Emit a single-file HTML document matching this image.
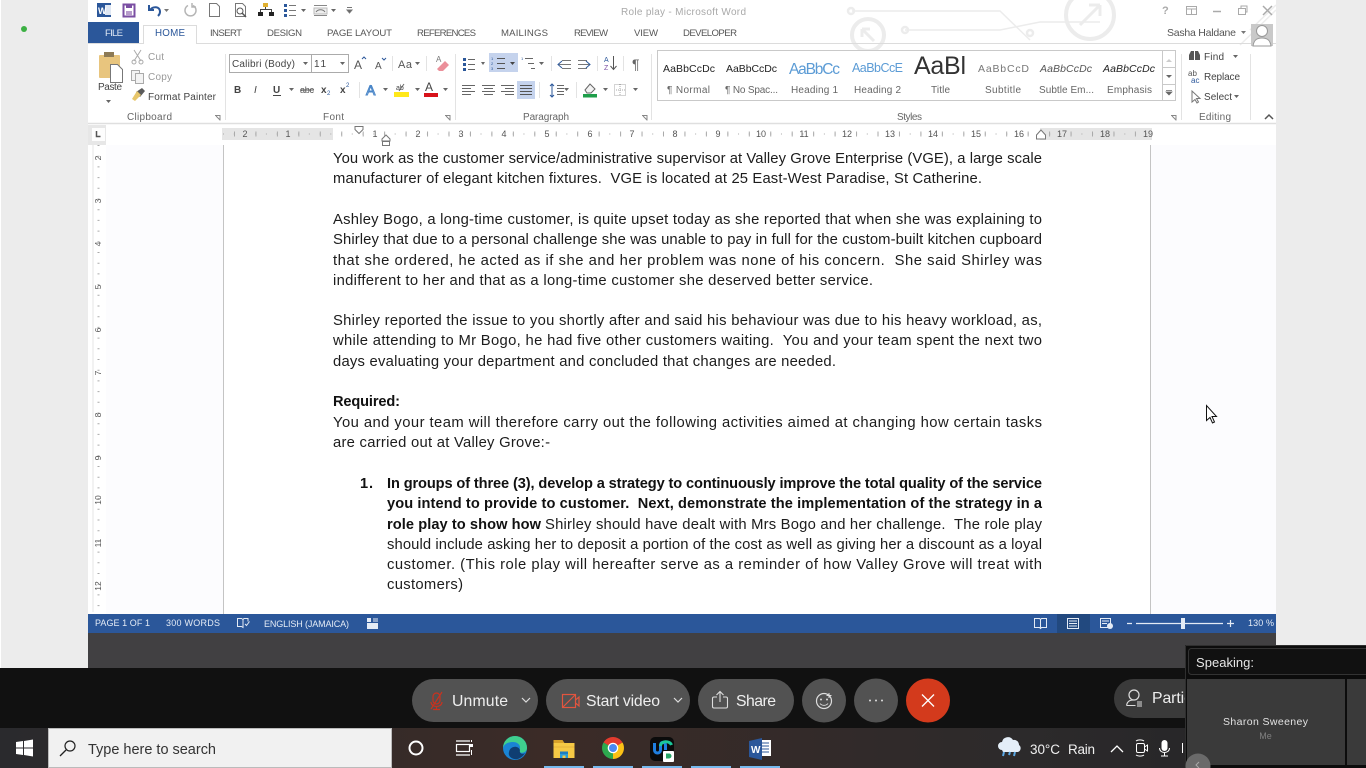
<!DOCTYPE html>
<html lang="en"><head><meta charset="utf-8"><title>Role play - Microsoft Word</title>
<style>
html,body{margin:0;padding:0;width:1366px;height:768px;overflow:hidden;background:#ececec}
svg{display:block;position:absolute;left:0;top:0}
text{font-family:"Liberation Sans",sans-serif;white-space:pre}
.d{font-size:14.800px;fill:#1c1c1c}
.b{font-size:14.600px;fill:#111;font-weight:bold}
.t{font-size:9.600px;fill:#555}
.r{font-size:10px;fill:#444}
.g{font-size:10px;fill:#666}
.n{font-size:9px;fill:#555}
.s{font-size:9px;fill:#e4ebf5}
.z{font-size:15.800px;fill:#eee}
.soft{filter:blur(.3px)}
.docsoft{filter:blur(.2px)}
</style></head><body>
<svg width="1366" height="768" viewBox="0 0 1366 768" xmlns="http://www.w3.org/2000/svg">
<rect width="1366" height="768" fill="#ececec"/>
<rect x="0" y="0" width="1" height="668" fill="#fff"/>
<circle cx="24" cy="29" r="3" fill="#3cb043"/>
<rect x="88" y="0" width="1188" height="614" fill="#fff"/>

<g class="soft">
<!-- circuit decoration -->
<g fill="none" stroke="#ececec" stroke-width="2.500">
<path d="M852 11H1000L1030 40M905 30H1000L1040 22H1100" stroke-width="1.500"/>
<circle cx="851" cy="11" r="3"/><circle cx="905" cy="30" r="3"/><circle cx="1030" cy="33" r="3"/>
<circle cx="868" cy="35" r="16" stroke-width="4"/><path d="M862 29l12 12M862 29h8M862 29v8" stroke-width="3"/>
<circle cx="1090" cy="15" r="24" stroke-width="4"/><path d="M1080 25l20-20M1100 5h-11M1100 5v11" stroke-width="3"/>
<path d="M1250 30L1276 5M1240 45L1276 10" stroke-width="1.500"/>
</g>

<!-- QAT -->
<rect x="97" y="3" width="14" height="14" fill="#2b579a"/><rect x="105" y="5" width="6" height="10" fill="#dfe7f3"/><text x="98" y="14" font-size="9" font-weight="bold" fill="#fff">W</text>
<rect x="123.500" y="4.500" width="11" height="12" fill="none" stroke="#7b4fa3" stroke-width="2"/><rect x="126" y="5" width="6" height="3" fill="#7b4fa3"/><rect x="126" y="11" width="6" height="5" fill="#b79ccb"/>
<path d="M150 10c3-4 10-4 10 2 0 2-1 3-2 4M149 5v5h5" fill="none" stroke="#2b579a" stroke-width="2"/>
<path d="M164 9h5l-2.500 3z" fill="#777"/>
<path d="M193 5.500a5.500 5.500 0 1 1-5 0M192 3v4h4" fill="none" stroke="#b5b5b5" stroke-width="1.500"/>
<path d="M209.500 3.500h7l3 3v10h-10z" fill="#fff" stroke="#777"/>
<path d="M235.500 3.500h7l3 3v10h-10z" fill="#fff" stroke="#777"/><circle cx="240" cy="11" r="3" fill="none" stroke="#555"/><path d="M242 13l4 4" stroke="#555" stroke-width="1.500"/>
<rect x="263" y="3" width="5" height="4" fill="#e0b030"/><rect x="258" y="12" width="5" height="4" fill="#222"/><rect x="269" y="12" width="5" height="4" fill="#222"/><path d="M265.500 7v2.500h-5V12M265.500 9.500h6V12" fill="none" stroke="#444"/>
<g fill="#2b579a"><rect x="284" y="4" width="3" height="3"/><rect x="284" y="9" width="3" height="3"/><rect x="284" y="14" width="3" height="3"/></g><path d="M289 5.500h7M289 10.500h7M289 15.500h7" stroke="#777"/><path d="M301 9h5l-2.500 3z" fill="#666"/>
<path d="M314 5.500h13M314 15.500h13" stroke="#888"/><rect x="314" y="8" width="13" height="6" fill="#eee" stroke="#bbb"/><path d="M316 12c2-3 7-3 9 0" fill="none" stroke="#777"/><path d="M331 9h5l-2.500 3z" fill="#666"/>
<path d="M347 7.500h5M347 10h5l-2.500 3z" stroke="#777" fill="#666"/>

<text x="621" y="15" font-size="10" fill="#a9a9a9" textLength="125">Role play - Microsoft Word</text>
<text x="1162" y="14" font-size="11" fill="#aaa" font-weight="bold">?</text>
<rect x="1186.500" y="6.500" width="10" height="8" fill="none" stroke="#aaa"/><path d="M1186 9h11M1191.500 9v5" stroke="#aaa"/>
<path d="M1213 11.500h8" stroke="#aaa" stroke-width="1.500"/>
<rect x="1238.500" y="8.500" width="7" height="6" fill="none" stroke="#aaa"/><path d="M1241 8V6h6v6h-2" fill="none" stroke="#aaa"/>
<path d="M1263 6l9 9M1272 6l-9 9" stroke="#aaa" stroke-width="1.500"/>

<!-- tabs -->
<rect x="88" y="22" width="51" height="21" fill="#2b579a"/>
<text x="105" y="36" font-size="9.600" fill="#dfe7f3" textLength="18">FILE</text>
<path d="M88 43.500H143.500V25.500H196.500V43.500H1276" fill="#fff" stroke="#dcdcdc"/>
<rect x="144" y="27" width="52" height="18" fill="#fff"/>
<text x="155" y="36" font-size="9.800" fill="#2b579a" textLength="30">HOME</text>
<text x="210" y="36" class="t" textLength="32">INSERT</text>
<text x="267" y="36" class="t" textLength="35">DESIGN</text>
<text x="327" y="36" class="t" textLength="65">PAGE LAYOUT</text>
<text x="417" y="36" class="t" textLength="59">REFERENCES</text>
<text x="501" y="36" class="t" textLength="47">MAILINGS</text>
<text x="574" y="36" class="t" textLength="34">REVIEW</text>
<text x="634" y="36" class="t" textLength="24">VIEW</text>
<text x="683" y="36" class="t" textLength="54">DEVELOPER</text>
<text x="1167" y="36" class="t" textLength="69" style="font-size:10.500px">Sasha Haldane</text>
<path d="M1241 31h5l-2.500 3z" fill="#777"/>
<rect x="1251" y="24" width="22" height="22" fill="#c9c9c9"/><circle cx="1262" cy="31" r="5.500" fill="#fff" stroke="#999"/><path d="M1253 46c1-7 5-8 9-8s8 1 9 8z" fill="#fff" stroke="#999"/>

<!-- ribbon -->
<path d="M88 123.500H1276" stroke="#dfdfdf" stroke-width="1.500"/>
<path d="M225.500 54V120M455.500 54V120M651.500 54V120M1181.500 54V120M1250.500 54V120" stroke="#e3e3e3"/>

<!-- clipboard -->
<rect x="99" y="55" width="21" height="23" rx="1" fill="#e8c57e"/><rect x="104" y="52" width="10" height="5" fill="#8d7a55"/><path d="M110.500 64.500h7l5 5v13h-12z" fill="#fff" stroke="#777"/>
<text x="98" y="90" class="r" textLength="24">Paste</text><path d="M106 100h5l-2.500 3z" fill="#666"/>
<path d="M134 50l7 11M141 50l-7 11" stroke="#aaa"/><circle cx="134" cy="62" r="2" fill="none" stroke="#aaa"/><circle cx="141" cy="62" r="2" fill="none" stroke="#aaa"/>
<text x="148" y="60" class="g" style="fill:#9a9a9a" textLength="16">Cut</text>
<rect x="131.500" y="70.500" width="8" height="10" fill="#f3f3f3" stroke="#aaa"/><rect x="135.500" y="73.500" width="8" height="10" fill="#f3f3f3" stroke="#aaa"/>
<text x="148" y="80" class="g" style="fill:#9a9a9a" textLength="24">Copy</text>
<path d="M136 92l6-4 3 3-5 6z" fill="#5b5b5b"/><path d="M132 99l5-8 4 4-6 6z" fill="#e7c66b"/>
<text x="148" y="100" class="r" textLength="68">Format Painter</text>
<text x="127" y="120" class="g" textLength="45">Clipboard</text>
<path d="M215 115.500h5v5M216 116l4 4" fill="none" stroke="#888"/>

<!-- font -->
<rect x="229.500" y="54.500" width="119" height="18" fill="#fff" stroke="#ababab"/><path d="M311.500 54.500V72.500" stroke="#ababab"/>
<text x="232" y="67" class="r" textLength="63">Calibri (Body)</text><path d="M303 62h5l-2.500 3z" fill="#666"/>
<text x="314" y="67" class="r" textLength="12">11</text><path d="M340 62h5l-2.500 3z" fill="#666"/>
<text x="354" y="69" font-size="12" fill="#555">A</text><path d="M362 59l2-2 2 2" fill="none" stroke="#2b579a"/>
<text x="375" y="69" font-size="10" fill="#555">A</text><path d="M382 58l2 2 2-2" fill="none" stroke="#2b579a"/>
<path d="M392.500 56V71" stroke="#e3e3e3"/>
<text x="398" y="68" font-size="11" fill="#555" textLength="14">Aa</text><path d="M415 62h5l-2.500 3z" fill="#666"/>
<path d="M426.500 56V71" stroke="#e3e3e3"/>
<path d="M437 69l8-8 4 4-6 6h-4z" fill="#eb8f9a"/><text x="436" y="62" font-size="8" fill="#777">A</text>

<text x="234" y="93" font-size="10" font-weight="bold" fill="#444">B</text>
<text x="254" y="93" font-size="10" font-style="italic" fill="#444" font-family="Liberation Serif">I</text>
<text x="273" y="93" font-size="10" fill="#444" font-weight="bold">U</text><path d="M273 95.500h8" stroke="#444"/>
<path d="M289 88h5l-2.500 3z" fill="#666"/>
<text x="300" y="93" font-size="9" fill="#555" textLength="14">abc</text><path d="M300 90h14" stroke="#555"/>
<text x="321" y="93" font-size="10" fill="#444" font-weight="bold">x</text><text x="327" y="95" font-size="6" fill="#2b579a">2</text>
<text x="340" y="93" font-size="10" fill="#444" font-weight="bold">x</text><text x="346" y="87" font-size="6" fill="#2b579a">2</text>
<path d="M359.500 82V98" stroke="#e3e3e3"/>
<text x="366" y="95" font-size="14" fill="#fff" stroke="#4a86c8" stroke-width="1">A</text><path d="M383 88h5l-2.500 3z" fill="#666"/>
<text x="396" y="90" font-size="7" fill="#444">ab</text><path d="M404 84l-5 7" stroke="#666"/><rect x="394" y="92" width="15" height="5" fill="#ffe81a"/><path d="M415 88h5l-2.500 3z" fill="#666"/>
<text x="425" y="91" font-size="12" fill="#444">A</text><rect x="424" y="93" width="14" height="4" fill="#d8121a"/><path d="M443 88h5l-2.500 3z" fill="#666"/>
<text x="323" y="120" class="g" textLength="21">Font</text>
<path d="M445 115.500h5v5M446 116l4 4" fill="none" stroke="#888"/>

<!-- paragraph -->
<rect x="489" y="53" width="29" height="19" fill="#c5d3ed"/>
<g fill="#2b579a"><rect x="463" y="58" width="3" height="3"/><rect x="463" y="63" width="3" height="3"/><rect x="463" y="68" width="3" height="3"/></g>
<path d="M468 59.500h7M468 64.500h7M468 69.500h7" stroke="#666"/><path d="M481 62h4l-2 3z" fill="#666"/>
<text x="491" y="60" font-size="4" fill="#2b579a">1</text><text x="491" y="65" font-size="4" fill="#2b579a">2</text><text x="491" y="70" font-size="4" fill="#2b579a">3</text>
<path d="M497 58.500h8M497 63.500h8M497 68.500h8" stroke="#555"/><path d="M510 62h5l-2.500 3z" fill="#444"/>
<text x="521" y="60" font-size="4" fill="#2b579a">1</text><path d="M525 58.500h8M528 63.500h6M531 68.500h4" stroke="#666"/><path d="M539 62h5l-2.500 3z" fill="#666"/>
<path d="M551.500 56V71" stroke="#e3e3e3"/>
<path d="M558 64.500h13M562 60.500h9M562 68.500h9" stroke="#777"/><path d="M562 61l-4 3.500 4 3.500" fill="none" stroke="#2b579a"/>
<path d="M578 64.500h12M578 60.500h9M578 68.500h9" stroke="#777"/><path d="M586 61l4 3.500-4 3.500" fill="none" stroke="#2b579a"/>
<path d="M597.500 56V71" stroke="#e3e3e3"/>
<text x="604" y="62" font-size="7" fill="#2b579a">A</text><text x="604" y="70" font-size="7" fill="#7b4fa3">Z</text><path d="M613.500 56v13M610.500 66l3 3.500 3-3.500" fill="none" stroke="#555"/>
<path d="M623.500 56V71" stroke="#e3e3e3"/>
<text x="632" y="69" font-size="14" fill="#666">¶</text>

<path d="M462 85.500h13M462 88.500h9M462 91.500h13M462 94.500h9" stroke="#666"/>
<path d="M482 85.500h13M484 88.500h9M482 91.500h13M484 94.500h9" stroke="#666"/>
<path d="M501 85.500h13M505 88.500h9M501 91.500h13M505 94.500h9" stroke="#666"/>
<rect x="517" y="81" width="18" height="18" fill="#c5d3ed"/><path d="M520 85.500h12M520 88.500h12M520 91.500h12M520 94.500h12" stroke="#555"/>
<path d="M539.500 82V98" stroke="#e3e3e3"/>
<path d="M552 84v13M550 86l2-2 2 2M550 95l2 2 2-2" fill="none" stroke="#2b579a"/><path d="M557 85.500h7M557 88.500h7M557 91.500h7M557 94.500h7" stroke="#666"/><path d="M564 88h5l-2.500 3z" fill="#666"/>
<path d="M576.500 82V98" stroke="#e3e3e3"/>
<path d="M585 90l5-6 5 5-4 4h-4z" fill="#f3f3f3" stroke="#666"/><rect x="583" y="94" width="14" height="3.500" fill="#1e9e4a"/><path d="M603 88h5l-2.500 3z" fill="#666"/>
<rect x="614.500" y="84.500" width="11" height="11" fill="none" stroke="#aaa" stroke-dasharray="1 1"/><path d="M620 84v12M614 90h12" stroke="#aaa" stroke-dasharray="1 1"/><path d="M633 88h5l-2.500 3z" fill="#666"/>
<text x="523" y="120" class="g" textLength="46">Paragraph</text>
<path d="M642 115.500h5v5M643 116l4 4" fill="none" stroke="#888"/>

<!-- styles -->
<rect x="657.500" y="50.500" width="518" height="50" fill="#fff" stroke="#c9c9c9"/>
<path d="M1162.500 50.500V100.500M1162.500 67.500H1175.500M1162.500 84.500H1175.500" stroke="#c9c9c9"/>
<path d="M1166 62l3-3 3 3z" fill="#ccc"/><path d="M1166 75h6l-3 3z" fill="#666"/><path d="M1166 90.500h6M1166 92h6l-3 3z" stroke="#666" stroke-width=".7" fill="#666"/>
<text x="663" y="72" font-size="10.500" fill="#222" textLength="52">AaBbCcDc</text>
<text x="726" y="72" font-size="10.500" fill="#222" textLength="51">AaBbCcDc</text>
<text x="789" y="74" font-size="15.500" fill="#5b9bd5" textLength="51">AaBbCc</text>
<text x="852" y="72" font-size="12.500" fill="#5b9bd5" textLength="51">AaBbCcE</text>
<text x="914" y="74" font-size="25" fill="#333" textLength="52">AaBl</text>
<text x="978" y="72" font-size="10.500" fill="#777" textLength="51">AaBbCcD</text>
<text x="1040" y="72" font-size="10.500" fill="#555" font-style="italic" textLength="52">AaBbCcDc</text>
<text x="1103" y="72" font-size="10.500" fill="#222" font-style="italic" textLength="52">AaBbCcDc</text>
<text x="667" y="93" class="g" textLength="43">¶ Normal</text>
<text x="725" y="93" class="g" textLength="53">¶ No Spac...</text>
<text x="791" y="93" class="g" textLength="47">Heading 1</text>
<text x="854" y="93" class="g" textLength="47">Heading 2</text>
<text x="931" y="93" class="g" textLength="19">Title</text>
<text x="985" y="93" class="g" textLength="36">Subtitle</text>
<text x="1039" y="93" class="g" textLength="55">Subtle Em...</text>
<text x="1107" y="93" class="g" textLength="45">Emphasis</text>
<text x="897" y="120" class="g" textLength="25">Styles</text>
<path d="M1171 115.500h5v5M1172 116l4 4" fill="none" stroke="#888"/>

<!-- editing -->
<path d="M1189 60v-5l2-4h3v9zM1195 60v-9h3l2 4v5z" fill="#555"/>
<text x="1204" y="60" class="r" textLength="20">Find</text><path d="M1233 55h5l-2.500 3z" fill="#666"/>
<text x="1188" y="76" font-size="8" fill="#555">ab</text><text x="1191" y="83" font-size="8" fill="#2b579a">ac</text>
<text x="1204" y="80" class="r" textLength="36">Replace</text>
<path d="M1192 91v11l3-2.500 2 3.500 1.500-1-2-3.500h3.500z" fill="#fff" stroke="#777"/>
<text x="1204" y="100" class="r" textLength="28">Select</text><path d="M1234 95h5l-2.500 3z" fill="#666"/>
<text x="1199" y="120" class="g" textLength="32">Editing</text>
<path d="M1265 119l4-4 4 4" fill="none" stroke="#555" stroke-width="1.500"/>

<!-- horizontal ruler -->
<rect x="88" y="125" width="18" height="20" fill="#e7e7e7"/>
<rect x="92" y="128" width="13" height="13" fill="#fdfdfd"/>
<path d="M96.500 131v5.500h4" fill="none" stroke="#555" stroke-width="1.500"/>
<rect x="222" y="128" width="930" height="12" fill="#fff"/>
<rect x="222" y="128" width="111" height="12" fill="#e5e5e5"/>
<rect x="1040" y="128" width="112" height="12" fill="#e5e5e5"/>
<path d="M223 134H1152" stroke="#aaa" stroke-dasharray="1 9.730"/>
<path d="M224 134H1152" stroke="#aaa" stroke-width="5" stroke-dasharray="1 20.450" stroke-dashoffset="-10"/>
<g text-anchor="middle" font-size="9" fill="#555">
<rect x="240" y="129" width="10" height="10" fill="#e5e5e5"/><rect x="283" y="129" width="10" height="10" fill="#e5e5e5"/>
<text x="245" y="137">2</text><text x="288" y="137">1</text>
<text x="375" y="137">1</text><text x="418" y="137">2</text><text x="461" y="137">3</text><text x="504" y="137">4</text><text x="547" y="137">5</text><text x="590" y="137">6</text><text x="632" y="137">7</text><text x="675" y="137">8</text><text x="718" y="137">9</text><text x="761" y="137">10</text><text x="804" y="137">11</text><text x="847" y="137">12</text><text x="890" y="137">13</text><text x="933" y="137">14</text><text x="976" y="137">15</text><text x="1019" y="137">16</text><text x="1062" y="137">17</text><text x="1105" y="137">18</text><text x="1148" y="137">19</text>
</g>
<path d="M355 126.500h8v3l-4 4-4-4z" fill="#fff" stroke="#777"/>
<path d="M386 135l-4 4v2h8v-2z" fill="#fff" stroke="#777"/><rect x="382.500" y="141.500" width="7" height="4" fill="#fff" stroke="#777"/>
<path d="M1041 130l-4.500 5v4h9v-4z" fill="#fff" stroke="#777"/>

<!-- vertical ruler -->
<path d="M93 145V612" stroke="#e6e6e6"/>
<path d="M98.500 145V612" stroke="#aaa" stroke-width="2" stroke-dasharray="1 9.700"/>
<g font-size="8.500" fill="#555" text-anchor="middle">
<text transform="rotate(-90 101 158)" x="101" y="158">2</text>
<text transform="rotate(-90 101 201)" x="101" y="201">3</text>
<text transform="rotate(-90 101 244)" x="101" y="244">4</text>
<text transform="rotate(-90 101 287)" x="101" y="287">5</text>
<text transform="rotate(-90 101 330)" x="101" y="330">6</text>
<text transform="rotate(-90 101 373)" x="101" y="373">7</text>
<text transform="rotate(-90 101 415)" x="101" y="415">8</text>
<text transform="rotate(-90 101 458)" x="101" y="458">9</text>
<text transform="rotate(-90 101 500)" x="101" y="500">10</text>
<text transform="rotate(-90 101 543)" x="101" y="543">11</text>
<text transform="rotate(-90 101 586)" x="101" y="586">12</text>
</g>
</g>

<!-- page -->
<rect x="106" y="145" width="117" height="469" fill="#fcfcfe"/>
<rect x="1151" y="145" width="125" height="469" fill="#fcfcfe"/>
<path d="M223.500 145V614M1150.500 145V614" stroke="#c4c4c4"/>

<g class="docsoft">
<text class="d" x="333" y="163" textLength="709">You work as the customer service/administrative supervisor at Valley Grove Enterprise (VGE), a large scale</text>
<text class="d" x="333" y="183" textLength="649">manufacturer of elegant kitchen fixtures.  VGE is located at 25 East-West Paradise, St Catherine.</text>
<text class="d" x="333" y="224" textLength="709">Ashley Bogo, a long-time customer, is quite upset today as she reported that when she was explaining to</text>
<text class="d" x="333" y="244" textLength="709">Shirley that due to a personal challenge she was unable to pay in full for the custom-built kitchen cupboard</text>
<text class="d" x="333" y="265" textLength="709">that she ordered, he acted as if she and her problem was none of his concern.  She said Shirley was</text>
<text class="d" x="333" y="285" textLength="540">indifferent to her and that as a long-time customer she deserved better service.</text>
<text class="d" x="333" y="325" textLength="709">Shirley reported the issue to you shortly after and said his behaviour was due to his heavy workload, as,</text>
<text class="d" x="333" y="345" textLength="709">while attending to Mr Bogo, he had five other customers waiting.  You and your team spent the next two</text>
<text class="d" x="333" y="366" textLength="503">days evaluating your department and concluded that changes are needed.</text>
<text class="b" x="333" y="406" textLength="67">Required:</text>
<text class="d" x="333" y="427" textLength="709">You and your team will therefore carry out the following activities aimed at changing how certain tasks</text>
<text class="d" x="333" y="447" textLength="217">are carried out at Valley Grove:-</text>
<text class="b" x="360" y="488" textLength="13">1.</text>
<text class="b" x="387" y="488" textLength="655">In groups of three (3), develop a strategy to continuously improve the total quality of the service</text>
<text class="b" x="387" y="508" textLength="655">you intend to provide to customer.  Next, demonstrate the implementation of the strategy in a</text>
<text class="b" x="387" y="529" textLength="154">role play to show how</text>
<text class="d" x="545" y="529" textLength="497">Shirley should have dealt with Mrs Bogo and her challenge.  The role play</text>
<text class="d" x="387" y="549" textLength="655">should include asking her to deposit a portion of the cost as well as giving her a discount as a loyal</text>
<text class="d" x="387" y="569" textLength="655">customer. (This role play will hereafter serve as a reminder of how Valley Grove will treat with</text>
<text class="d" x="387" y="589" textLength="76">customers)</text>
</g>

<!-- mouse cursor -->
<path d="M1206.500 405.500v15l3.500-3 2.500 5.500 2-1-2.500-5.500h4.500z" fill="#fff" stroke="#111"/>

<!-- status bar -->
<rect x="88" y="614" width="1188" height="19" fill="#2b579a"/>
<text x="95" y="626" class="s" textLength="55">PAGE 1 OF 1</text>
<text x="166" y="626" class="s" textLength="54">300 WORDS</text>
<path d="M237.500 618.500h4l1.500 1v8l-1.500-1h-4zM243 619.500l1-1h4v3M245 624l1.500 1.500 3-4" fill="none" stroke="#e4ebf5"/>
<text x="264" y="627" class="s" textLength="85">ENGLISH (JAMAICA)</text>
<rect x="367" y="618" width="4" height="4" fill="#e4ebf5"/><rect x="367" y="623" width="11" height="6" fill="#e4ebf5"/><path d="M373 619h5M373 621h5" stroke="#e4ebf5"/>
<path d="M1034.500 618.500h5l1 1 1-1h5v9h-5l-1 1-1-1h-5zM1040.500 619.500v8" fill="none" stroke="#e4ebf5"/>
<rect x="1057" y="614" width="33" height="19" fill="#22497f"/>
<rect x="1067.500" y="618.500" width="11" height="10" fill="none" stroke="#e4ebf5"/><path d="M1069 621h8M1069 623.500h8M1069 626h8" stroke="#e4ebf5"/>
<rect x="1100.500" y="618.500" width="10" height="9" fill="none" stroke="#e4ebf5"/><path d="M1102 621h7M1102 623.500h5" stroke="#e4ebf5"/><circle cx="1110" cy="626" r="3" fill="#e4ebf5"/>
<path d="M1127 623.500h5M1136 623.500h87M1227 623.500h7M1230.500 620v7" stroke="#e4ebf5" stroke-width="1.200"/>
<rect x="1181" y="618" width="4" height="11" fill="#e4ebf5"/>
<text x="1248" y="626" class="s" textLength="26">130 %</text>

<!-- dark band -->
<rect x="88" y="633" width="1188" height="35" fill="#414042"/>
<rect x="0" y="668" width="1366" height="60" fill="#111"/>

<!-- zoom buttons -->
<g fill="#525252">
<rect x="412" y="679" width="126" height="43" rx="21.500"/>
<rect x="546" y="679" width="144" height="43" rx="21.500"/>
<rect x="698" y="679" width="96" height="43" rx="21.500"/>
<circle cx="824" cy="700.500" r="22"/>
<circle cx="876" cy="700.500" r="22"/>
<rect x="1114" y="679" width="90" height="39" rx="19.500" fill="#3a3a3a"/>
</g>
<circle cx="928" cy="700.500" r="22" fill="#d33a1c"/>
<path d="M922 694.500l12 12M934 694.500l-12 12" stroke="#fff" stroke-width="1.300"/>
<g fill="none" stroke="#c8321f" stroke-width="1.200">
<rect x="433" y="693" width="7" height="11" rx="3.500"/><path d="M431 702c0 6 11 6 11 0M436.500 706.500v3M433 709.500h7M431 709l11-17"/>
</g>
<text class="z" x="452" y="706" textLength="56">Unmute</text>
<path d="M522 698l4 4 4-4" fill="none" stroke="#ddd" stroke-width="1.200"/>
<rect x="562.500" y="694.500" width="13" height="13" fill="none" stroke="#e2553f" stroke-width="1.200"/><path d="M575.500 700l3.500-3v9l-3.500-3M562.500 707.500l13-13" fill="none" stroke="#e2553f" stroke-width="1.200"/>
<text class="z" x="586" y="706" textLength="74">Start video</text>
<path d="M674 698l4 4 4-4" fill="none" stroke="#ddd" stroke-width="1.200"/>
<path d="M717 697h-3a1.500 1.500 0 0 0-1.500 1.500v8a1.500 1.500 0 0 0 1.500 1.500h12a1.500 1.500 0 0 0 1.500-1.500v-8a1.500 1.500 0 0 0-1.500-1.500h-3M720 702v-10M716.500 695l3.500-3.500 3.500 3.500" fill="none" stroke="#ddd" stroke-width="1.100"/>
<text class="z" x="736" y="706" textLength="40">Share</text>
<circle cx="824" cy="701" r="7.500" fill="none" stroke="#ddd" stroke-width="1.200"/><circle cx="821" cy="699.500" r="1" fill="#ddd"/><circle cx="827" cy="699.500" r="1" fill="#ddd"/><path d="M820 703.500c2 2.500 6 2.500 8 0M829 693v5M826.500 695.500h5" fill="none" stroke="#ddd"/>
<g fill="#ddd"><circle cx="870" cy="700.500" r="1"/><circle cx="876" cy="700.500" r="1"/><circle cx="882" cy="700.500" r="1"/></g>
<circle cx="1134" cy="695" r="5" fill="none" stroke="#ddd" stroke-width="1.200"/><path d="M1126.500 705.500c1-5 4-5.500 7.500-5.500M1126.500 705.500h9M1137 702h5M1137 704h5M1137 706h5" fill="none" stroke="#ddd" stroke-width="1.100"/>
<text class="z" x="1152" y="703" textLength="40">Partic</text>

<!-- taskbar -->
<defs><linearGradient id="tb" x1="0" x2="1" y1="0" y2="0"><stop offset="0" stop-color="#2a2a2d"/><stop offset=".4" stop-color="#3b2b27"/><stop offset=".75" stop-color="#2c2a2b"/><stop offset="1" stop-color="#232326"/></linearGradient></defs>
<rect x="0" y="728" width="1366" height="40" fill="url(#tb)"/>
<path d="M16 742l7-1v6.500h-7zM24 741l9-1.500v8h-9zM16 748.500h7v6.500l-7-1zM24 748.500h9v8l-9-1.500z" fill="#fff"/>
<rect x="48.500" y="728.500" width="343" height="39" fill="#f1f1f1" stroke="#bbb"/>
<circle cx="70" cy="746" r="5" fill="none" stroke="#222" stroke-width="1.200"/><path d="M66 750l-6 6" stroke="#222" stroke-width="1.300"/>
<text x="88" y="754" font-size="14.500" fill="#333" textLength="128">Type here to search</text>
<circle cx="416" cy="748" r="6.500" fill="none" stroke="#fff" stroke-width="2"/>
<path d="M456 741h14M456 755h14" stroke="#fff" stroke-width="1.300"/><rect x="456.500" y="744.500" width="13" height="7" fill="none" stroke="#fff" stroke-width="1.200"/><rect x="470" y="744" width="3" height="3" fill="#fff"/><path d="M471.500 740v2M471.500 750v5" stroke="#fff"/>

<!-- edge -->
<circle cx="515" cy="748" r="12" fill="#1a84d4"/>
<path d="M503 748a12 12 0 0 1 24 0c0 5-7 6-8 3 3-5-1-9-6-9-5 0-9 2-10 6z" fill="#3fcf8e"/>
<path d="M509 752c1-6 9-7 11-2-1 3 2 5 5 3-2 4-7 7-11 6-4-1-6-4-5-7z" fill="#0f3e72"/>
<!-- explorer -->
<path d="M553.500 740h9l2 3h-11z" fill="#d8a12a"/><rect x="553.500" y="743" width="21" height="15" fill="#f6c945"/><path d="M553.500 747h21" stroke="#e6b43a"/><path d="M560 753h8v5h-2.500v-2.500h-3V758H560z" fill="#2a9bd8"/><rect x="560" y="751.500" width="8" height="2.500" fill="#1f7dc0"/>
<!-- chrome -->
<path d="M613 748L603.500 742.500A11 11 0 0 1 622.500 742.500Z" fill="#e33b2e"/>
<path d="M613 748L622.500 742.500A11 11 0 0 1 613 759Z" fill="#fbc116"/>
<path d="M613 748L613 759A11 11 0 0 1 603.500 742.500Z" fill="#2da94f"/>
<circle cx="613" cy="748" r="5.300" fill="#fff"/><circle cx="613" cy="748" r="4" fill="#4a89f3"/>
<!-- webex -->
<rect x="650" y="737" width="24" height="24" rx="5" fill="#0b0b0b"/>
<path d="M654.500 743v7c0 4 6 4 6 0v-5c0-3.500 5-3.500 5 0v5" fill="none" stroke="#1f7fe0" stroke-width="3"/>
<path d="M660.500 746c0-5 9-6 11-1" fill="none" stroke="#1bc79a" stroke-width="3"/>
<rect x="663" y="751" width="11" height="11" rx="1" fill="#fff"/><path d="M666 753.500h3a2.500 2.500 0 0 1 0 5h-3z" fill="#27a567"/>
<!-- word -->
<rect x="756" y="740" width="15" height="16" fill="#fff"/><path d="M759 743h10M759 746h10M759 749h10M759 752h10" stroke="#2b579a"/>
<path d="M749 741l13-3v22l-13-3z" fill="#2b579a"/><text x="751" y="753" font-size="10" font-weight="bold" fill="#fff">W</text>

<!-- taskbar running indicators -->
<g fill="#76b9ed"><rect x="544" y="766" width="40" height="2"/><rect x="593" y="766" width="40" height="2"/><rect x="642" y="766" width="40" height="2"/><rect x="691" y="766" width="40" height="2"/><rect x="740" y="766" width="40" height="2"/></g>

<!-- tray -->
<path d="M1002 750a4 4 0 0 1 0-8 6 6 0 0 1 11-2 5 5 0 0 1 6 5 4 4 0 0 1-1 7h-15z" fill="#e4eef8"/>
<path d="M1004 752l-1 4M1010 752l-1 3M1015 752l-1 4" stroke="#5aa9e6" stroke-width="2"/>
<text x="1030" y="754" font-size="13.500" fill="#f0f0f0" textLength="30">30°C</text>
<text x="1068" y="754" font-size="13.500" fill="#f0f0f0" textLength="27">Rain</text>
<path d="M1111 752l6-6 6 6" fill="none" stroke="#fff" stroke-width="1.300"/>
<rect x="1136.500" y="743.500" width="8" height="9" rx="1.500" fill="none" stroke="#fff"/><path d="M1144.500 747l3-2v6l-3-2M1136 741c2-1.500 6-1.500 8 0M1136 755c2 1.500 6 1.500 8 0" fill="none" stroke="#fff"/>
<rect x="1161.500" y="740" width="6" height="11" rx="3" fill="#fff"/><path d="M1159.500 748c0 6 10 6 10 0M1164.500 753v3M1161 756h7" fill="none" stroke="#fff"/>
<path d="M1182.500 743v10" stroke="#fff"/>

<!-- speaking panel -->
<rect x="1185" y="645" width="181" height="123" fill="#0c0c0c"/>
<path d="M1185.500 645.500H1366M1185.500 645.500V768" stroke="#2f2f2f"/>
<rect x="1188.500" y="648.500" width="190" height="26" rx="3" fill="#111" stroke="#333"/>
<text x="1196" y="667" font-size="13" fill="#e6e6e6" textLength="58">Speaking:</text>
<rect x="1187" y="679" width="158" height="86" fill="#3a3a3a"/>
<rect x="1347" y="679" width="19" height="86" fill="#3a3a3a"/>
<text x="1265.500" y="725" font-size="10.500" fill="#e2e2e2" text-anchor="middle" textLength="85">Sharon Sweeney</text>
<text x="1265.500" y="739" font-size="9" fill="#808080" text-anchor="middle">Me</text>
<circle cx="1198" cy="766" r="12.500" fill="#6a6a6a"/>
<path d="M1199 762l-3 3 3 3" fill="none" stroke="#aaa"/>
</svg>
</body></html>
